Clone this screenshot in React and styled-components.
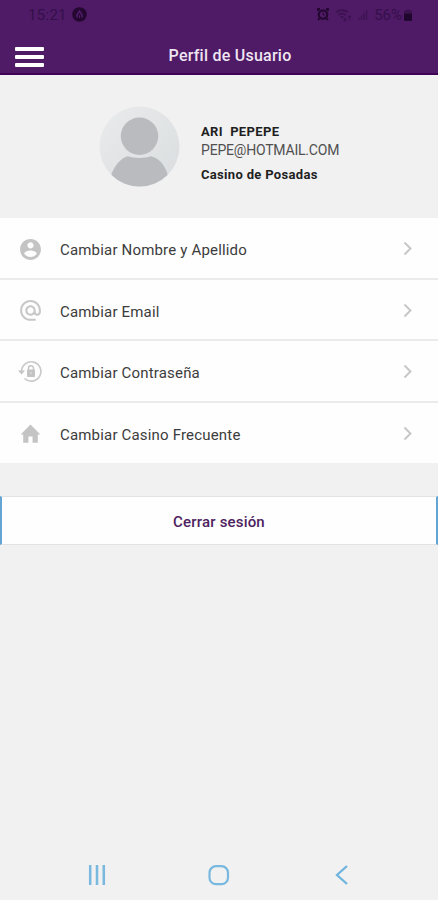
import React from "react";
import styled, { createGlobalStyle } from "styled-components";

const GlobalStyle = createGlobalStyle`
  *, *::before, *::after { box-sizing: border-box; }
  body { margin: 0; background: #f1f1f1; font-family: Roboto, "Noto Sans", sans-serif; }
  svg { display: block; flex: none; }
`;

const Screen = styled.div`
  width: 438px;
  height: 900px;
  display: flex;
  flex-direction: column;
  overflow: hidden;
  background: #f1f1f1;
`;

const Header = styled.header`
  height: 75px;
  background: #4f1a66;
  border-bottom: 2px solid #3f0458;
`;

const StatusBar = styled.div`
  height: 29px;
  padding: 0 26px 0 28px;
  display: flex;
  align-items: center;
  justify-content: space-between;
  color: #34104a;
  font-size: 15px;
  line-height: 28px;
`;

const StatusGroup = styled.div`
  display: flex;
  align-items: center;
  gap: ${(p) => p.$gap}px;
`;

const StatusText = styled.span`
  letter-spacing: ${(p) => p.$spacing || 0}px;
`;

const TitleBar = styled.div`
  height: 44px;
  padding: 0 0 0 15px;
  display: grid;
  grid-template-columns: 30px 1fr 23px;
  align-items: center;
`;

const MenuButton = styled.button`
  height: 20px;
  margin-top: 12px;
  padding: 0;
  border: 0;
  background: none;
  display: flex;
  flex-direction: column;
  justify-content: space-between;
`;

const MenuLine = styled.span`
  width: 29px;
  height: 4px;
  border-radius: 1px;
  background: #fff;
`;

const Title = styled.h1`
  margin: 10px 0 0;
  text-align: center;
  color: #eee6f2;
  font-size: 16px;
  font-weight: 500;
  line-height: 20px;
  letter-spacing: 0.24px;
`;

const Profile = styled.section`
  height: 143px;
  padding: 0 0 0 99px;
  display: flex;
  align-items: center;
  gap: 21px;
`;

const Identity = styled.div`
  display: flex;
  flex-direction: column;
  padding-top: 12px;
  white-space: pre;
`;

const IdentityLine = styled.span`
  height: ${(p) => p.$height}px;
  color: ${(p) => p.$color};
  font-size: ${(p) => p.$size}px;
  font-weight: ${(p) => p.$weight};
  line-height: 19px;
  letter-spacing: ${(p) => p.$spacing}px;
`;

const Options = styled.nav`
  height: 245px;
  display: grid;
  grid-template-rows: 62px 61px 62px 60px;
  background: #fefefe;
`;

const Option = styled.a`
  padding: 2px 20px 0 18px;
  display: grid;
  grid-template-columns: 42px 1fr 20px;
  align-items: center;
  border-bottom: ${(p) => (p.$last ? "0" : "2px solid #ebebeb")};
  color: #3c3c3c;
`;

const OptionLabel = styled.span`
  padding-top: 2px;
  font-size: 15px;
  line-height: 20px;
  letter-spacing: 0.18px;
`;

const Logout = styled.button`
  width: 100%;
  height: 49px;
  margin-top: 33px;
  padding: 3px 0 0;
  border: solid;
  border-width: 1px 2px;
  border-color: #e3e3e3 #65a5d3;
  background: #fefefe;
  color: #4d2260;
  font-family: inherit;
  font-size: 15px;
  font-weight: 500;
  letter-spacing: 0.18px;
`;

const SystemNav = styled.footer`
  height: 50px;
  margin-top: auto;
  padding: 0 35px 0 36px;
  display: grid;
  grid-template-columns: repeat(3, 1fr);
  align-items: center;
  justify-items: center;
`;

const AppBadge = () => (
  <svg width="15" height="15" viewBox="0 0 15 15">
    <circle cx="7.5" cy="7.5" r="7.3" fill="#250832" />
    <path d="M5 10.5V8L7.5 4 10 8v2.5" fill="none" stroke="#4f1a66" strokeWidth="1.7" />
    <path d="M7.5 8v3" stroke="#4f1a66" />
  </svg>
);

const Alarm = () => (
  <svg width="12" height="13" viewBox="0 0 12 13" fill="none" stroke="#250832">
    <path d="M1 3V1h2M9 1h2v2M2.5 10.5 1 12M9.5 10.5 11 12" strokeWidth="1.9" />
    <circle cx="6" cy="6.500" r="4.200" strokeWidth="2.200" />
    <path d="M6 4.300v2.500h2" />
  </svg>
);

const Wifi = () => (
  <svg width="17" height="14" viewBox="0 0 17 14" fill="none" stroke="#3b124f" strokeWidth="1.700">
    <path d="M1 4.200Q7 .200 13 4.200M3.300 7Q7 4.400 10.700 7M5.600 9.500Q7 8.400 8.400 9.500" />
    <path d="M10 9.500v3.500M8.500 11.500l1.500 1.500 1.500-1.500M14.500 12.500V8M13 9.500 14.500 8 16 9.500" strokeWidth="1.100" />
  </svg>
);

const Signal = () => (
  <svg width="10" height="12" viewBox="0 0 10 12" fill="none" stroke="#3f1553" strokeWidth="1.500">
    <path d="M1 11V8.800M3.500 11V6.500M6 11V4M8.500 11V1" />
  </svg>
);

const Battery = () => (
  <svg width="8" height="12" viewBox="0 0 9 13">
    <path d="M3 0h3v1.500h2Q9 1.500 9 2.500V12q0 1-1 1H1q-1 0-1-1V2.500Q0 1.500 1 1.500h2z" fill="#3a124d" />
    <path d="M0 5h9v7q0 1-1 1H1q-1 0-1-1z" fill="#1f062d" />
  </svg>
);

const Avatar = () => (
  <svg width="81" height="81" viewBox="0 0 81 81">
    <defs>
      <linearGradient id="avatarShade" x1="0" y1="0" x2="1" y2="1">
        <stop offset="0" stopColor="#e9ebec" />
        <stop offset="1" stopColor="#dadddf" />
      </linearGradient>
      <clipPath id="avatarClip">
        <circle cx="40.5" cy="40.5" r="40" />
      </clipPath>
    </defs>
    <circle cx="40.5" cy="40.5" r="40" fill="url(#avatarShade)" />
    <g fill="#b9bbbe" clipPath="url(#avatarClip)">
      <circle cx="40.5" cy="30.2" r="18.700" />
      <path d="M12.500 68C16.500 58 22.500 52 29 50.300c6 2.300 17 2.300 23 0C60 52.500 65.500 58.500 68.500 68V82H12.500z" />
    </g>
  </svg>
);

const Chevron = () => (
  <svg width="20" height="20" viewBox="0 0 20 20">
    <path d="M6.500 3.500 12.500 9.500 6.500 15.500" fill="none" stroke="#c6c6c6" strokeWidth="1.900" />
  </svg>
);

const UserIcon = () => (
  <svg width="25" height="25" viewBox="0 0 24 24" fill="#c4c4c4">
    <path d="M12 2C6.480 2 2 6.480 2 12s4.480 10 10 10 10-4.480 10-10S17.520 2 12 2zm0 3c1.660 0 3 1.340 3 3s-1.340 3-3 3-3-1.340-3-3 1.340-3 3-3zm0 14.200c-2.500 0-4.710-1.280-6-3.220.030-1.990 4-3.080 6-3.080 1.990 0 5.970 1.090 6 3.080-1.290 1.940-3.500 3.220-6 3.220z" />
  </svg>
);

const EmailIcon = () => (
  <svg width="25" height="25" viewBox="0 0 24 24" fill="#c8c8c8">
    <path d="M12 1.950c-5.520 0-10 4.480-10 10s4.480 10 10 10h5v-2h-5c-4.340 0-8-3.660-8-8s3.660-8 8-8 8 3.660 8 8v1.430c0 .790-.710 1.570-1.500 1.570s-1.500-.780-1.500-1.570v-1.430c0-2.760-2.240-5-5-5s-5 2.240-5 5 2.240 5 5 5c1.380 0 2.640-.560 3.540-1.470.650.890 1.770 1.470 2.960 1.470 1.970 0 3.500-1.600 3.500-3.570v-1.430c0-5.520-4.480-10-10-10zm0 13c-1.660 0-3-1.340-3-3s1.340-3 3-3 3 1.340 3 3-1.340 3-3 3z" />
  </svg>
);

const PasswordIcon = () => (
  <svg width="25" height="25" viewBox="0 0 25 25">
    <path d="M3.500 11.500A9.700 9.700 0 1 1 6.500 18.500" fill="none" stroke="#cacaca" strokeWidth="1.700" />
    <path d="M0 10.500h7l-3.500 4z" fill="#c4c4c4" />
    <path d="M10.500 10V8.200a2.500 2.500 0 0 1 5 0V10" fill="none" stroke="#c4c4c4" strokeWidth="1.500" />
    <rect x="9" y="9.500" width="8" height="7.500" rx=".8" fill="#c4c4c4" />
    <circle cx="13" cy="13" r=".8" fill="#e8e8e8" />
  </svg>
);

const HomeIcon = () => (
  <svg width="25" height="25" viewBox="0 0 24 24" fill="#c4c4c4">
    <path d="M10 20v-6h4v6h5v-8h2.500L12 2.500 2.500 12H5v8z" />
  </svg>
);

const RecentIcon = () => (
  <svg width="18" height="20" viewBox="0 0 18 20" stroke="#79b9df" strokeWidth="2.500">
    <path d="M2.200 0v20M9 0v20M15.800 0v20" />
  </svg>
);

const HomeKeyIcon = () => (
  <svg width="22" height="21" viewBox="0 0 22 21">
    <rect x="1.500" y="1.200" width="18.500" height="18" rx="6.500" fill="none" stroke="#79b9df" strokeWidth="2.200" />
  </svg>
);

const BackIcon = () => (
  <svg width="13" height="20" viewBox="0 0 13 20">
    <path d="M12 1 2 10l10 9" fill="none" stroke="#6eb4dd" strokeWidth="2.300" />
  </svg>
);

const OPTIONS = [
  { label: "Cambiar Nombre y Apellido", Icon: UserIcon },
  { label: "Cambiar Email", Icon: EmailIcon },
  { label: "Cambiar Contraseña", Icon: PasswordIcon },
  { label: "Cambiar Casino Frecuente", Icon: HomeIcon },
];

export default function App() {
  return (
    <>
      <GlobalStyle />
      <Screen>
        <Header>
          <StatusBar>
            <StatusGroup $gap={5}>
              <StatusText $spacing={0.3}>15:21</StatusText>
              <AppBadge />
            </StatusGroup>
            <StatusGroup $gap={6}>
              <Alarm />
              <Wifi />
              <Signal />
              <StatusGroup $gap={2}>
                <StatusText>56%</StatusText>
                <Battery />
              </StatusGroup>
            </StatusGroup>
          </StatusBar>
          <TitleBar>
            <MenuButton aria-label="Menú">
              <MenuLine />
              <MenuLine />
              <MenuLine />
            </MenuButton>
            <Title>Perfil de Usuario</Title>
          </TitleBar>
        </Header>
        <Profile>
          <Avatar />
          <Identity>
            <IdentityLine $height={19} $size={13} $weight={700} $color="#1f1f1f" $spacing={0.36}>
              {"ARI  PEPEPE"}
            </IdentityLine>
            <IdentityLine $height={24} $size={14} $weight={400} $color="#505050" $spacing={-0.2}>
              PEPE@HOTMAIL.COM
            </IdentityLine>
            <IdentityLine $height={19} $size={13} $weight={700} $color="#1f1f1f" $spacing={0.32}>
              Casino de Posadas
            </IdentityLine>
          </Identity>
        </Profile>
        <Options>
          {OPTIONS.map(({ label, Icon }, i) => (
            <Option key={label} $last={i === OPTIONS.length - 1}>
              <Icon />
              <OptionLabel>{label}</OptionLabel>
              <Chevron />
            </Option>
          ))}
        </Options>
        <Logout>Cerrar sesión</Logout>
        <SystemNav>
          <RecentIcon />
          <HomeKeyIcon />
          <BackIcon />
        </SystemNav>
      </Screen>
    </>
  );
}
